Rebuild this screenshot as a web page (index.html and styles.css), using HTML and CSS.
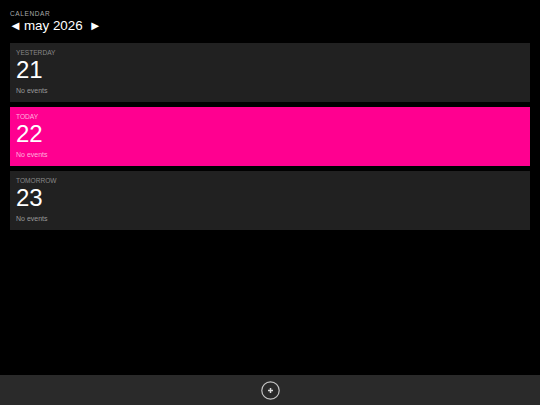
FILE: index.html
```html
<!DOCTYPE html>
<html lang="en">
<head>
    <meta charset="UTF-8">
    <meta name="viewport" content="width=device-width, initial-scale=1.0">
    <title>Calendar</title>
    <link rel="stylesheet" href="styles.css">
</head>
<body>
    <div class="app">
        <div class="content">
            <div class="header">
                <div class="app-title">CALENDAR</div>
                <div class="month-nav">
                    <span class="arrow">◄</span>
                    <span class="month">may 2026</span>
                    <span class="arrow">►</span>
                </div>
            </div>
            <div class="day-list">
                <div class="day">
                    <div class="day-label">YESTERDAY</div>
                    <div class="day-number">21</div>
                    <div class="day-events">No events</div>
                </div>
                <div class="day today">
                    <div class="day-label">TODAY</div>
                    <div class="day-number">22</div>
                    <div class="day-events">No events</div>
                </div>
                <div class="day">
                    <div class="day-label">TOMORROW</div>
                    <div class="day-number">23</div>
                    <div class="day-events">No events</div>
                </div>
            </div>
        </div>
        <div class="toolbar">
            <button class="add-button" aria-label="Add">
                <svg width="19" height="19" viewBox="0 0 19 19">
                    <circle cx="9.5" cy="9.5" r="8.7" fill="none" stroke="#c4c4c4" stroke-width="1.2"/>
                    <path d="M9.5 7v5M7 9.5h5" stroke="#ddd" stroke-width="1.5"/>
                </svg>
            </button>
        </div>
    </div>
</body>
</html>
```

FILE: styles.css
```css
html, body {
    margin: 0;
    height: 100%;
}

body {
    background-color: #000;
    color: #fff;
    font-family: 'Liberation Sans', Arial, sans-serif;
}

.app {
    display: flex;
    flex-direction: column;
    height: 405px;
}

.content {
    flex: 1;
    padding: 10px 10px 0;
}

.header {
    margin-bottom: 8px;
    height: 25px;
}

.app-title {
    font-size: 6.5px;
    line-height: 7px;
    letter-spacing: 0.6px;
    color: #aaa;
}

.month-nav {
    display: flex;
    align-items: center;
    gap: 2px;
    height: 17px;
    margin-left: -1px;
    font-size: 13.4px;
}

.month {
    margin-right: 4px;
}

.arrow {
    font-size: 13px;
}

.day-list {
    display: flex;
    flex-direction: column;
    gap: 5px;
}

.day {
    box-sizing: border-box;
    height: 59px;
    padding: 6px 6px 0;
    background-color: #212121;
}

.day-label {
    font-size: 6.6px;
    line-height: 8px;
    color: #888;
}

.day-number {
    font-size: 24px;
    line-height: 26px;
}

.day-events {
    font-size: 7px;
    line-height: 8px;
    margin-top: 4px;
    color: #999;
}

.today {
    background-color: #ff0090;
}

.today .day-label,
.today .day-events {
    color: #ffb3de;
}

.toolbar {
    display: flex;
    justify-content: center;
    align-items: center;
    height: 30px;
    background-color: #2a2a2a;
}

.add-button {
    display: flex;
    padding: 0;
    border: none;
    background: none;
}
```
